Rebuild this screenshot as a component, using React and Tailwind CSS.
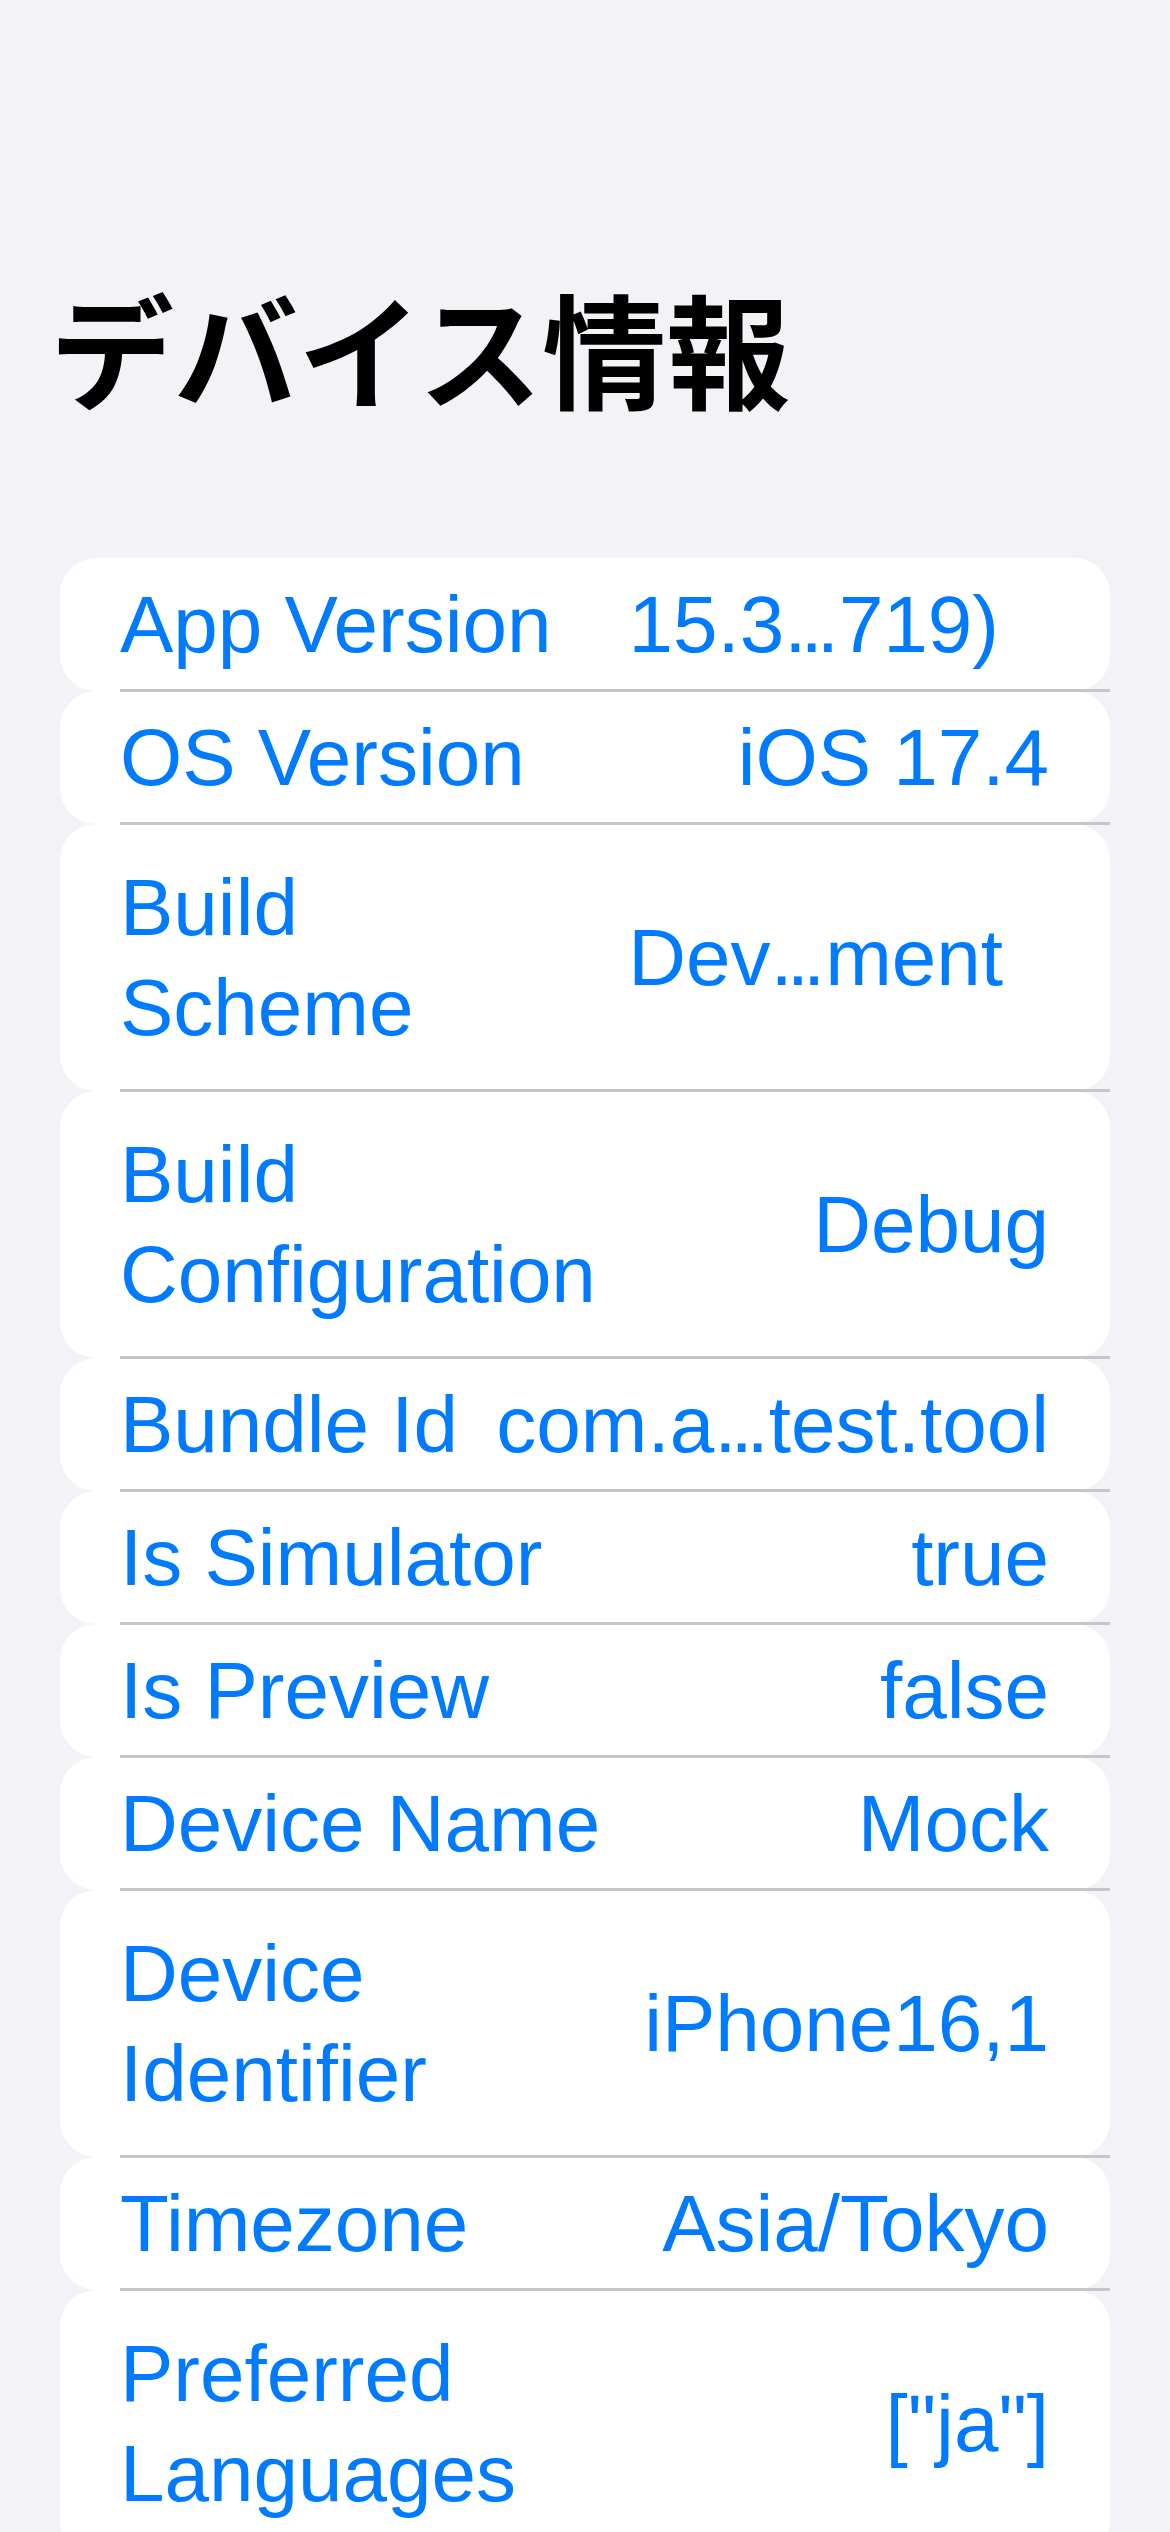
import React from "react";

const rows = [
  { label: "App Version", value: ["15.3", "719)"], mr: "mr-[50px]" },
  { label: "OS Version", value: "iOS 17.4" },
  { label: "Build Scheme", value: ["Dev", "ment"], two: true, mr: "mr-[46px]" },
  { label: "Build Configuration", value: "Debug", two: true },
  { label: "Bundle Id", value: ["com.a", "test.tool"] },
  { label: "Is Simulator", value: "true" },
  { label: "Is Preview", value: "false" },
  { label: "Device Name", value: "Mock" },
  { label: "Device Identifier", value: "iPhone16,1", two: true },
  { label: "Timezone", value: "Asia/Tokyo" },
  { label: "Preferred Languages", value: '["ja"]', two: true },
];

// truncated values: SwiftUI's ellipsis is tighter than the font's "…"
const Value = ({ value }) =>
  Array.isArray(value) ? (
    <>
      {value[0]}
      <span className="tracking-[-6px] pr-[6px]">...</span>
      {value[1]}
    </>
  ) : (
    value
  );

const Row = ({ row }) => {
  const parts = row.label.split(" ");
  return (
    <div>
      <div
        className={
          "bg-white rounded-[36px] pl-[60px] pr-[61px] flex items-center justify-between gap-[36px] " +
          (row.two ? "h-[267px]" : "h-[133px]")
        }
      >
        <div className="leading-[100px] whitespace-nowrap">
          {row.two ? (
            <>
              <div>{parts[0]}</div>
              <div>{parts.slice(1).join(" ")}</div>
            </>
          ) : (
            row.label
          )}
        </div>
        <div className={"whitespace-nowrap leading-[100px] " + (row.mr || "")}>
          <Value value={row.value} />
        </div>
      </div>
      <div className="relative z-10 ml-[60px] h-[3px] -mt-[2px] -mb-[1px] bg-[#c6c6c8]" />
    </div>
  );
};

const App = () => {
  return (
    <div
      className="h-[2532px] overflow-hidden bg-[#f2f2f7]"
      style={{ fontFamily: '"Liberation Sans", Arial, sans-serif' }}
    >
      <h1
        className="pt-[284px] pl-[50px] text-[124px] font-bold leading-none text-black"
        style={{ fontFamily: '"Noto Sans CJK JP", "Noto Sans", sans-serif' }}
      >
        デバイス情報
      </h1>
      <div className="mt-[150px] mx-[60px] text-[80px] text-[#007aff]">
        {rows.map((r) => (
          <Row key={r.label} row={r} />
        ))}
      </div>
    </div>
  );
};

export default App;
